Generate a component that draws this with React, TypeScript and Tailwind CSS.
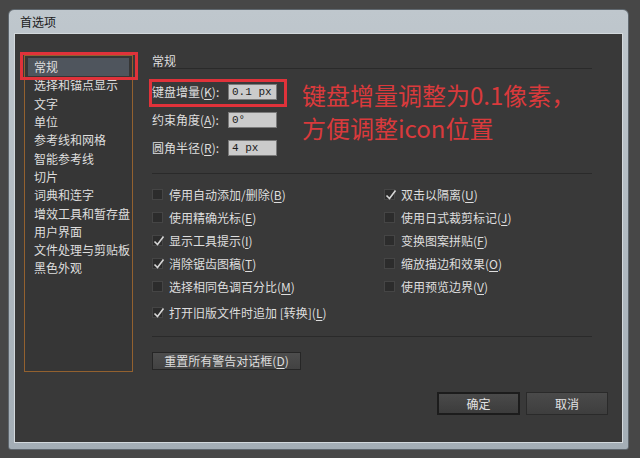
import React from "react";

type Check = { label: string; k: string; checked: boolean };

const leftChecks: Check[] = [
  { label: "停用自动添加/删除", k: "B", checked: false },
  { label: "使用精确光标", k: "E", checked: false },
  { label: "显示工具提示", k: "I", checked: true },
  { label: "消除锯齿图稿", k: "T", checked: true },
  { label: "选择相同色调百分比", k: "M", checked: false },
];

const rightChecks: Check[] = [
  { label: "双击以隔离", k: "U", checked: true },
  { label: "使用日式裁剪标记", k: "J", checked: false },
  { label: "变换图案拼贴", k: "F", checked: false },
  { label: "缩放描边和效果", k: "O", checked: false },
  { label: "使用预览边界", k: "V", checked: false },
];

const navItems = [
  "常规",
  "选择和锚点显示",
  "文字",
  "单位",
  "参考线和网格",
  "智能参考线",
  "切片",
  "词典和连字",
  "增效工具和暂存盘",
  "用户界面",
  "文件处理与剪贴板",
  "黑色外观",
];

function Mnemonic({ text, k, colon }: { text: string; k: string; colon?: boolean }) {
  return (
    <span className="whitespace-pre">
      {text}(<span className="underline underline-offset-2">{k}</span>){colon ? ":" : ""}
    </span>
  );
}

function CheckRow({ item }: { item: Check }) {
  return (
    <div className="flex h-[23px] items-center gap-[6px]">
      <span className="relative h-[11px] w-[11px] shrink-0 border border-[#454545] bg-[#2c2c2c]">
        {item.checked && (
          <svg viewBox="0 0 12 12" className="absolute -top-[1px] left-0 h-[12px] w-[12px]">
            <path d="M1.5 6.5 L4.5 9.5 L10.5 1.5" fill="none" stroke="#d6d6d6" strokeWidth="1.6" />
          </svg>
        )}
      </span>
      <Mnemonic text={item.label} k={item.k} />
    </div>
  );
}

function Field({ label, k, value }: { label: string; k: string; value: string }) {
  return (
    <div className="flex h-[16px] items-center">
      <div className="w-[76px]">
        <Mnemonic text={label} k={k} colon />
      </div>
      <div className="flex h-[16px] w-[49px] items-center border border-[#7a7a7a] bg-[#cbcbcb] pl-[3px] font-['Liberation_Mono',monospace] text-[11px] text-[#1c1c1c]">
        {value}
      </div>
    </div>
  );
}

export default function App() {
  return (
    <div className="relative h-[458px] w-[640px] overflow-hidden bg-[#474747] pl-[8px] pt-[9px] font-['Noto_Sans_CJK_SC','Noto_Sans',sans-serif] text-[12px] text-[#dedede]">
      <div className="flex h-[441px] w-[621px] flex-col rounded-t-[6px] rounded-b-[3px] border border-[#5f676e] bg-gradient-to-b from-[#bfc7cd] to-[#a4aeb6] px-[5px] pb-[6px]">
        <div className="flex h-[23px] items-center pl-[6px] text-[12px] text-[#1b1b1b]">首选项</div>
        <div className="flex flex-1 flex-col border border-[#d3d9dd] bg-[#393939] pr-[14px] pt-[19px]">
          <div className="flex items-start">
            <div className="ml-[9px] mt-[2px] h-[317px] w-[109px] border border-[#93612f] bg-[#363636] px-[3px] pt-[2px]">
              {navItems.map((item, i) => (
                <div
                  key={item}
                  className={`flex h-[18.3px] items-center whitespace-nowrap pl-[6px] ${i === 0 ? "bg-[#4f555d]" : ""}`}
                >
                  {item}
                </div>
              ))}
            </div>

            <div className="ml-[19px] w-[440px]">
              <div className="flex h-[16px] items-center border-b border-[#2a2a2a]">常规</div>

              <div className="mt-[15px] flex flex-col gap-[12px]">
                <Field label="键盘增量" k="K" value="0.1 px" />
                <Field label="约束角度" k="A" value="0°" />
                <Field label="圆角半径" k="R" value="4 px" />
              </div>

              <div className="mt-[17px] border-t border-[#2a2a2a]" />

              <div className="mt-[9px] grid grid-cols-[232px_1fr]">
                <div>
                  {leftChecks.map((c) => (
                    <CheckRow key={c.label} item={c} />
                  ))}
                </div>
                <div>
                  {rightChecks.map((c) => (
                    <CheckRow key={c.label} item={c} />
                  ))}
                </div>
              </div>

              <div className="mt-[3px]">
                <CheckRow item={{ label: "打开旧版文件时追加 [转换]", k: "L", checked: true }} />
              </div>

              <div className="mt-[12px] border-t border-[#2a2a2a]" />

              <button className="mt-[15px] flex h-[18px] w-[149px] items-center justify-center border border-[#262626] bg-gradient-to-b from-[#4d4d4d] to-[#424242] text-[12px] text-[#dedede]">
                <Mnemonic text="重置所有警告对话框" k="D" />
              </button>
            </div>
          </div>

          <div className="mt-[20px] flex justify-end gap-[6px]">
            <button className="flex h-[23px] w-[83px] items-center justify-center border-2 border-[#1c1c1c] bg-gradient-to-b from-[#4a4a4a] to-[#3c3c3c] text-[12px] text-[#e2e2e2]">
              确定
            </button>
            <button className="flex h-[23px] w-[82px] items-center justify-center border border-[#2a2a2a] bg-gradient-to-b from-[#4a4a4a] to-[#3e3e3e] text-[12px] text-[#e2e2e2]">
              取消
            </button>
          </div>
        </div>
      </div>

      {/* red annotation overlays */}
      <div className="absolute left-[20px] top-[52px] h-[28px] w-[118px] border-[3px] border-[#e0323a]" />
      <div className="absolute left-[149px] top-[79px] h-[28px] w-[138px] border-[3px] border-[#e0323a]" />
      <div className="absolute left-[302px] top-[78px] text-[24px] leading-[33px] text-[#d93a3c]">
        <div>键盘增量调整为0.1像素，</div>
        <div>方便调整icon位置</div>
      </div>
    </div>
  );
}
